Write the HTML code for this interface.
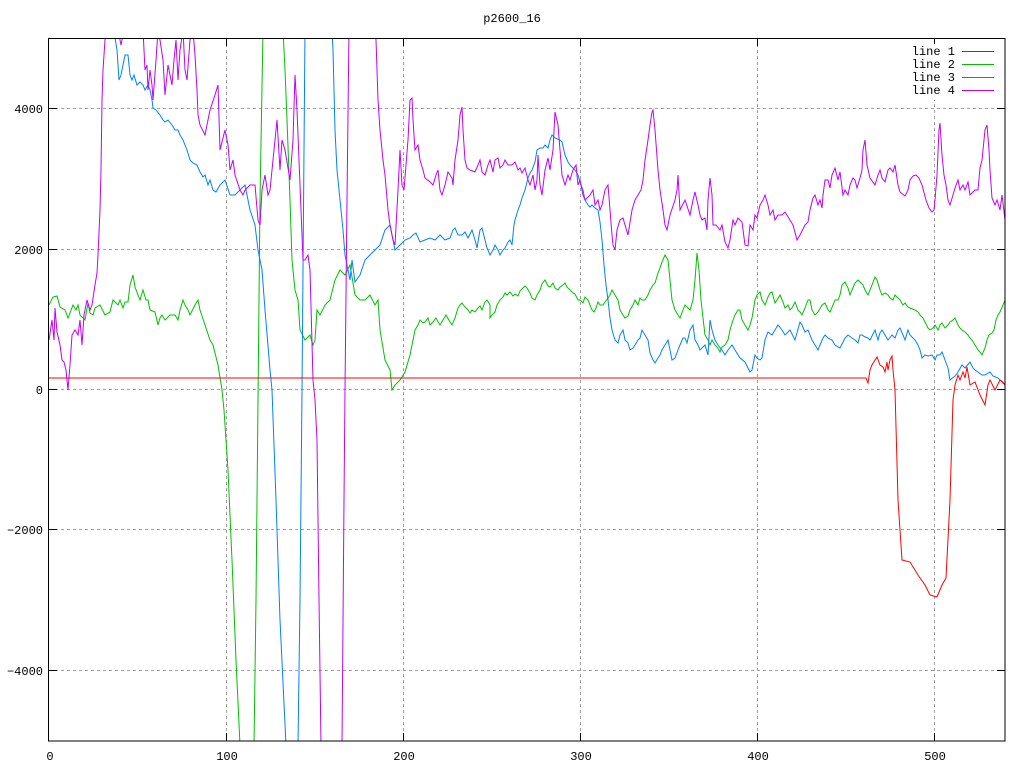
<!DOCTYPE html>
<html><head><meta charset="utf-8"><style>
html,body{margin:0;padding:0;background:#fff;}
svg{display:block;}
text{font-family:"Liberation Mono","DejaVu Sans Mono",monospace;font-size:12px;fill:#000;}
</style></head><body>
<svg width="1024" height="768" viewBox="0 0 1024 768" xmlns="http://www.w3.org/2000/svg">
<rect width="1024" height="768" fill="#fff"/>
<text x="512" y="22" text-anchor="middle">p2600_16</text>
<g stroke="#a0a0a0" stroke-dasharray="3,3" stroke-width="1">
<line x1="49" y1="108.5" x2="1005" y2="108.5"/>
<line x1="49" y1="249.5" x2="1005" y2="249.5"/>
<line x1="49" y1="389.5" x2="1005" y2="389.5"/>
<line x1="49" y1="529.5" x2="1005" y2="529.5"/>
<line x1="49" y1="670.5" x2="1005" y2="670.5"/>
<line x1="226.5" y1="38" x2="226.5" y2="741"/>
<line x1="403.5" y1="38" x2="403.5" y2="741"/>
<line x1="580.5" y1="38" x2="580.5" y2="741"/>
<line x1="757.5" y1="38" x2="757.5" y2="741"/>
<line x1="934.5" y1="38" x2="934.5" y2="741"/>
</g>
<g text-anchor="end">
<text x="43" y="113">4000</text><text x="43" y="254">2000</text><text x="43" y="394">0</text>
<text x="43" y="534">−2000</text><text x="43" y="675">−4000</text>
</g>
<g text-anchor="middle">
<text x="50" y="760">0</text><text x="227" y="760">100</text><text x="404" y="760">200</text>
<text x="581" y="760">300</text><text x="758" y="760">400</text><text x="935" y="760">500</text>
</g>
<svg x="49" y="38" width="956" height="703" viewBox="49 38 956 703" overflow="hidden">
<g fill="none" stroke-width="1">
<polyline stroke="#00c000" points="49,305 53,297 57,296 60,307 65,310 68,318 70,313 73,305 76,310 78,305 80,315 85,320 88,303 90,313 93,315 95,308 100,305 105,315 110,312 113,300 118,305 120,300 123,308 125,302 128,302 130,285 133,275 135,287 140,300 143,290 146,300 148,300 150,310 155,312 158,325 160,318 162,315 165,320 170,315 175,315 178,320 180,310 183,300 185,305 188,310 190,315 195,305 198,300 200,310 205,325 210,340 213,345 218,365 222,390 224,410 228,470 232,560 236,660 240,745 254,745 256,600 258,400 260,200 263,30 283,30 285,70 287,120 290,200 292,260 295,290 298,300 300,330 305,340 310,335 313,345 315,340 317,310 320,315 325,305 330,300 335,280 340,270 345,275 350,265 355,295 360,300 365,300 370,295 375,305 378,300 380,330 385,360 390,370 392,390 395,385 400,380 405,372 410,355 412,345 415,330 418,325 420,320 423,323 425,322 428,318 430,325 433,322 436,318 440,325 443,320 446,315 450,322 452,325 455,318 458,308 460,305 462,303 465,307 468,310 470,313 472,310 475,312 478,308 480,306 482,310 485,302 487,300 490,305 490,318 492,315 495,312 497,305 500,300 503,297 505,293 507,295 510,292 513,296 515,294 518,296 520,291 523,288 525,286 527,288 530,293 532,298 535,300 537,295 540,290 542,284 545,280 548,286 550,287 553,283 555,288 558,290 560,287 563,285 565,283 567,287 570,290 573,293 575,294 578,300 580,300 583,303 585,297 588,300 590,305 592,310 594,312 596,308 598,302 600,305 603,305 605,302 608,298 610,295 612,290 615,295 618,300 620,310 623,315 625,318 628,316 630,310 633,305 635,300 638,305 640,298 642,300 645,300 648,295 650,290 653,285 655,283 658,273 660,268 662,262 665,255 668,260 670,280 672,300 675,310 678,315 680,318 683,310 685,305 688,308 690,310 693,300 695,280 697,253 699,270 701,300 703,318 705,335 708,340 710,345 712,340 715,345 718,348 720,352 722,347 725,345 728,340 730,330 733,320 735,315 738,310 740,310 742,320 745,325 748,330 750,325 752,318 755,300 757,295 760,292 762,300 765,305 768,297 770,293 772,292 775,303 777,300 780,295 783,302 785,308 788,305 790,310 792,308 795,302 798,310 800,312 802,315 805,308 808,300 810,300 812,310 815,315 818,312 822,305 825,303 828,310 830,312 833,305 835,300 838,300 840,295 842,285 845,282 848,288 850,295 852,290 855,283 858,280 860,282 863,285 865,290 868,295 870,290 872,285 875,277 877,280 880,290 882,295 885,293 888,295 890,298 893,300 895,295 898,298 900,300 903,305 905,303 908,307 910,308 915,310 918,312 920,315 923,318 925,322 928,328 930,330 933,328 935,325 938,330 940,325 942,323 945,328 948,325 950,322 953,320 955,318 958,325 960,328 962,330 965,332 968,335 970,338 972,340 975,345 978,350 980,352 982,355 985,348 987,340 989,335 992,333 994,330 996,320 998,315 1000,312 1003,305 1005,300"/>
<polyline stroke="#0080ff" points="112,30 115,38 117,50 119,80 121,75 123,65 125,55 128,55 130,75 132,80 134,75 137,85 140,82 143,85 145,90 148,85 150,90 152,100 153,108 156,110 160,115 163,120 165,122 168,120 172,125 175,130 178,130 180,135 183,140 185,145 187,150 190,160 193,163 197,165 200,172 203,177 205,175 208,185 210,180 213,190 216,192 220,185 225,180 230,195 235,195 240,190 245,185 250,210 255,225 258,250 262,270 265,310 270,370 272,390 276,500 280,620 286,745 298,745 300,600 302,390 304,150 305,30 332,30 333,50 335,130 337,170 340,200 343,230 345,255 348,270 350,280 352,260 355,282 360,275 365,260 370,255 375,250 380,245 385,230 390,225 395,250 400,245 405,240 410,238 413,235 416,233 420,242 425,240 430,238 435,240 440,235 445,240 450,238 453,230 455,228 458,235 462,235 465,232 468,238 472,230 475,240 477,248 480,230 482,228 485,240 487,248 490,255 493,250 495,245 498,250 500,255 503,250 505,248 508,242 510,240 512,245 514,225 515,220 518,210 520,205 522,198 525,190 528,178 530,173 532,170 535,162 537,150 540,148 543,148 545,145 548,148 550,140 552,135 555,138 560,140 562,142 565,155 568,162 570,165 575,170 578,175 580,182 583,190 585,200 588,205 590,207 592,205 595,208 598,210 600,222 602,240 604,265 606,285 608,300 610,318 612,330 615,340 618,343 620,335 623,330 625,340 628,343 630,350 633,348 635,345 638,340 640,338 642,330 645,335 648,340 650,353 653,360 655,363 658,358 660,355 662,350 665,345 668,340 670,350 672,360 675,358 678,350 680,345 683,338 685,338 687,343 690,330 693,325 695,340 698,345 700,350 705,345 708,355 710,320 712,330 715,340 718,345 722,350 725,355 728,350 732,345 735,350 740,358 745,362 748,368 750,372 752,370 755,355 757,358 760,360 762,358 765,340 768,332 772,335 775,330 778,325 782,330 785,335 790,330 795,340 800,322 802,325 805,332 808,330 812,340 815,345 818,350 820,345 823,338 825,335 828,338 832,340 835,345 840,348 845,338 848,335 852,338 855,340 858,343 860,335 862,335 865,337 868,338 870,340 875,330 878,340 880,333 882,330 885,335 888,340 892,335 895,338 898,330 900,328 903,335 905,340 908,330 910,335 915,340 918,345 920,350 922,358 925,355 928,356 932,355 935,360 937,355 940,355 942,352 945,360 948,368 950,380 955,376 958,372 962,365 965,368 970,362 973,368 975,370 978,372 982,375 985,375 990,372 993,376 998,378 1000,380 1003,382 1005,385"/>
<polyline stroke="#c000ff" points="49,340 52,320 54,340 55,308 57,332 60,345 62,360 64,362 66,370 68,390 70,365 72,335 75,330 78,335 80,320 82,345 84,315 87,300 90,310 92,305 95,285 97,273 98,255 100,210 101,170 102,100 103,70 105,40 107,30 118,30 121,45 124,30 143,30 145,70 147,65 148,90 150,70 152,85 153,100 156,60 158,30 160,40 163,60 165,95 168,65 170,75 172,85 174,60 176,40 178,80 180,50 183,30 185,70 187,80 190,40 193,30 195,55 197,90 198,115 200,125 205,135 210,110 215,95 218,85 220,150 225,130 228,145 230,170 233,160 235,175 240,190 243,195 245,190 250,185 255,185 258,220 260,225 262,190 265,175 268,195 270,190 273,160 277,120 280,170 282,140 285,150 290,180 293,140 295,75 297,110 300,185 303,260 305,260 308,255 310,270 313,380 315,400 317,440 319,600 321,745 342,745 344,500 345,390 347,200 349,30 375,30 376,40 378,100 380,130 383,160 385,175 388,210 390,225 393,240 395,245 398,190 400,150 402,185 404,190 408,140 410,100 412,98 413,120 415,150 418,145 420,160 423,170 425,178 430,182 433,185 436,175 438,170 440,190 442,195 445,185 448,172 452,178 453,185 455,160 458,140 460,115 462,107 463,130 465,160 467,168 470,170 475,172 478,165 480,160 482,172 485,175 488,165 490,160 493,172 495,160 498,158 500,168 503,165 505,160 508,165 512,165 515,162 518,170 520,168 522,173 525,168 528,180 530,185 533,175 535,190 537,180 538,155 540,185 542,195 545,170 548,158 550,170 553,150 555,112 558,125 560,150 562,175 565,185 568,175 570,180 573,170 576,165 578,185 580,180 583,195 585,200 590,195 593,190 595,205 598,200 600,210 602,205 605,190 608,185 610,210 612,235 613,245 615,250 617,230 620,220 623,218 625,225 628,235 632,210 635,200 638,195 641,190 643,180 645,160 648,140 650,125 652,112 653,110 655,130 658,170 660,190 663,210 665,225 667,230 670,215 675,200 677,190 678,175 680,210 685,200 690,215 693,200 695,192 698,205 700,215 702,220 705,218 707,230 708,200 710,178 712,195 713,225 716,225 720,230 722,225 725,242 728,248 730,240 733,220 735,225 738,218 742,222 745,245 748,246 750,225 753,230 755,215 757,218 760,205 763,200 765,195 768,205 770,215 773,210 775,220 778,215 782,215 785,212 790,220 793,225 797,240 800,235 805,225 808,222 810,210 813,198 815,195 818,205 820,200 822,208 823,195 825,180 828,180 830,188 832,175 835,168 838,180 840,172 843,195 845,190 848,195 850,185 853,178 855,180 857,188 860,178 862,170 863,150 865,140 867,165 870,178 875,185 878,175 880,170 882,178 885,182 888,170 890,168 893,172 895,165 898,185 900,192 905,196 908,190 910,180 913,176 916,175 919,178 922,185 926,200 929,208 932,212 934,210 935,200 937,175 939,130 940,123 942,155 944,175 946,185 948,200 950,205 953,195 955,188 958,180 960,190 963,185 965,190 968,182 970,195 975,190 978,190 980,168 982,160 983,150 984,140 985,130 987,125 989,150 990,170 992,198 995,205 997,200 1000,210 1002,195 1005,220"/>
<polyline stroke="#ff0000" points="49,378 866,378 868,383 870,370 872,365 875,360 877,357 880,365 883,367 885,372 887,362 888,370 890,360 892,356 893,370 895,390 898,500 902,560 910,562 918,575 925,585 930,595 937,597 942,585 946,578 950,500 953,400 955,385 958,375 960,380 963,372 965,378 967,367 970,385 975,382 980,395 985,405 988,385 990,380 995,390 1000,380 1005,385"/>
</g>
</svg>
<rect x="48.5" y="38.5" width="956.5" height="702.5" fill="none" stroke="#000" stroke-width="1"/>
<g stroke="#000">
<line x1="49" y1="108.5" x2="57" y2="108.5"/><line x1="49" y1="249.5" x2="57" y2="249.5"/><line x1="49" y1="389.5" x2="57" y2="389.5"/><line x1="49" y1="529.5" x2="57" y2="529.5"/><line x1="49" y1="670.5" x2="57" y2="670.5"/>
<line x1="226.5" y1="741" x2="226.5" y2="733"/><line x1="403.5" y1="741" x2="403.5" y2="733"/><line x1="580.5" y1="741" x2="580.5" y2="733"/><line x1="757.5" y1="741" x2="757.5" y2="733"/><line x1="934.5" y1="741" x2="934.5" y2="733"/>
<line x1="226.5" y1="38" x2="226.5" y2="46"/><line x1="403.5" y1="38" x2="403.5" y2="46"/><line x1="580.5" y1="38" x2="580.5" y2="46"/><line x1="757.5" y1="38" x2="757.5" y2="46"/><line x1="934.5" y1="38" x2="934.5" y2="46"/>
<line x1="1005" y1="108.5" x2="997" y2="108.5"/><line x1="1005" y1="249.5" x2="997" y2="249.5"/><line x1="1005" y1="389.5" x2="997" y2="389.5"/><line x1="1005" y1="529.5" x2="997" y2="529.5"/><line x1="1005" y1="670.5" x2="997" y2="670.5"/>
</g>
<rect x="900" y="44" width="102" height="56" fill="#fff"/>
<g text-anchor="end">
<text x="955" y="55">line 1</text><text x="955" y="68">line 2</text><text x="955" y="81">line 3</text><text x="955" y="94">line 4</text>
</g>
<line x1="962" y1="51.5" x2="994" y2="51.5" stroke="#ff0000"/>
<line x1="962" y1="64.5" x2="994" y2="64.5" stroke="#00c000"/>
<line x1="962" y1="77.5" x2="994" y2="77.5" stroke="#0080ff"/>
<line x1="962" y1="90.5" x2="994" y2="90.5" stroke="#c000ff"/>
</svg>
</body></html>
